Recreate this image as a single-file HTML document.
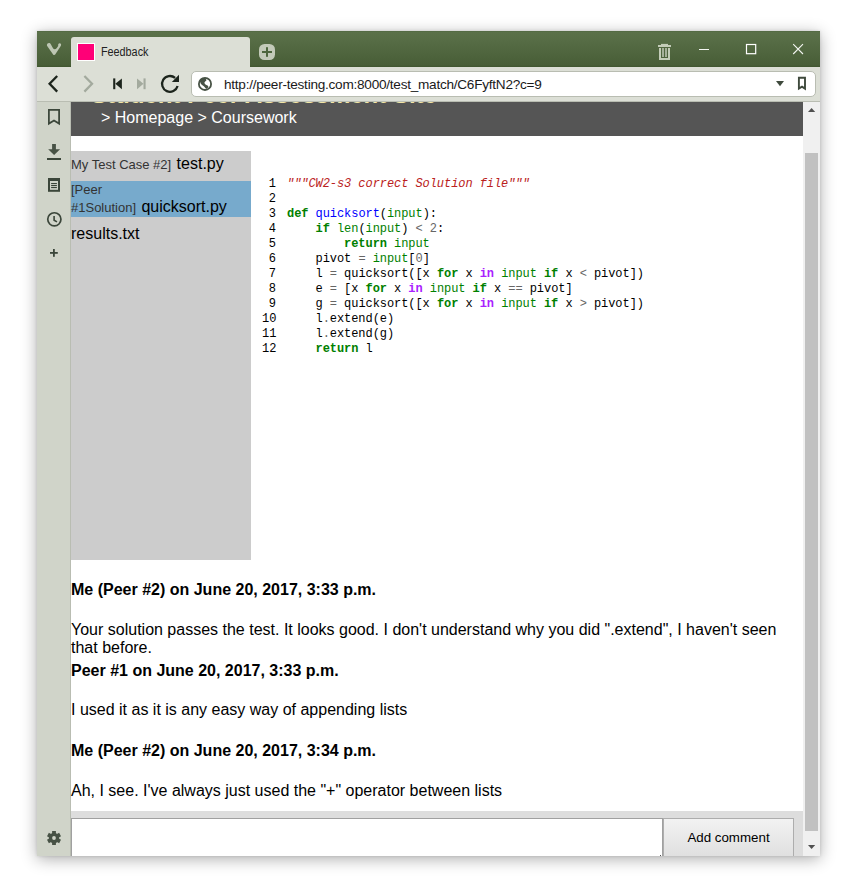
<!DOCTYPE html>
<html><head><meta charset="utf-8">
<style>
html,body{margin:0;padding:0;width:853px;height:892px;overflow:hidden;background:#fff;font-family:"Liberation Sans",sans-serif;}
.a{position:absolute;}
#win{left:37px;top:31px;width:783px;height:825px;box-shadow:0 3px 15px rgba(0,0,0,0.32),0 0 3px rgba(0,0,0,0.12);background:#d0d4c9;overflow:hidden;}
#title{left:37px;top:31px;width:783px;height:36px;background:linear-gradient(#4e653f 0px,#5b714a 1px,#5a7049 3px,#485e37 34px,#3f552f 36px);}
#tab{left:71px;top:37px;width:179px;height:30px;background:#dcdfd6;border-radius:3px 3px 0 0;}
#toolbar{left:37px;top:67px;width:783px;height:35px;background:#dcdfd6;}
#addr{left:191px;top:71px;width:623px;height:24px;background:#fff;border:1px solid #b9bdb2;border-radius:5px;}
#panel{left:37px;top:102px;width:33px;height:754px;background:#d0d4c9;border-right:1px solid #b9bdb2;}
#content{left:71px;top:102px;width:732px;height:754px;background:#fff;overflow:hidden;}
#hdr{left:71px;top:102px;width:732px;height:34px;background:#555555;overflow:hidden;}
#sb{left:803px;top:102px;width:17px;height:754px;background:#f0f0f0;}
#thumb{left:805px;top:153px;width:13px;height:678px;background:#c1c1c1;}
#files{left:71px;top:151px;width:180px;height:409px;background:#cccccc;}
.code{font-family:"Liberation Mono",monospace;font-size:12px;line-height:15px;white-space:pre;letter-spacing:-0.065px;}
.k{color:#008000;font-weight:bold}
.nb{color:#008000}
.nf{color:#0000ff}
.ow{color:#aa22ff;font-weight:bold}
.o{color:#666666}
.mi{color:#666666}
.sd{color:#ba2121;font-style:italic}
.cm{font-size:16px;line-height:18px;color:#000;white-space:nowrap;}
</style></head>
<body>
<div id="win" class="a"></div>
<div id="title" class="a"></div>
<div id="tab" class="a"></div>
<div id="toolbar" class="a"></div>
<div id="addr" class="a"></div>
<div id="panel" class="a"></div>
<div class="a" style="left:37px;top:101px;width:783px;height:1px;background:#b9bdb2;"></div>
<div id="content" class="a"></div>
<div id="hdr" class="a"><div class="a" style="left:20px;top:-19px;font-size:24px;line-height:24px;font-weight:bold;color:#f2e6a6;white-space:nowrap;">Student Peer Assessment Site</div></div>
<div id="sb" class="a"></div>
<div id="thumb" class="a"></div>
<div id="files" class="a"></div>

<!-- tab contents -->
<div class="a" style="left:77px;top:43px;width:16px;height:16px;background:#ff0077;border:1px solid #fff;"></div>
<div class="a" style="left:101px;top:45px;font-size:12px;color:#222;transform:scaleX(0.9);transform-origin:0 0;">Feedback</div>

<!-- url -->
<div class="a" style="left:224px;top:77px;font-size:13.6px;letter-spacing:-0.25px;color:#1a1a1a;">http://peer-testing.com:8000/test_match/C6FyftN2?c=9</div>

<!-- breadcrumb -->
<div class="a" style="left:101px;top:109px;font-size:16px;color:#fff;">&gt; Homepage &gt; Coursework</div>

<!-- files -->
<div class="a" style="left:71px;top:155px;font-size:13px;color:#333;white-space:nowrap;">My Test Case #2] <span style="font-size:16px;color:#000;margin-left:1.8px">test.py</span></div>
<div class="a" style="left:71px;top:181px;width:180px;height:36px;background:#77aacc;"></div>
<div class="a" style="left:71px;top:182px;font-size:13px;color:#333;line-height:15px;white-space:nowrap;">[Peer</div>
<div class="a" style="left:71px;top:198px;font-size:13px;color:#333;white-space:nowrap;">#1Solution] <span style="font-size:16px;color:#000;margin-left:1.8px">quicksort.py</span></div>
<div class="a" style="left:71px;top:225px;font-size:16px;color:#000;">results.txt</div>

<!-- code -->
<div class="a code" style="left:262px;top:177px;text-align:right;width:14px;">1
2
3
4
5
6
7
8
9
10
11
12</div>
<div class="a code" style="left:287px;top:177px;"><span class="sd">"""CW2-s3 correct Solution file"""</span>

<span class="k">def</span> <span class="nf">quicksort</span>(<span class="nb">input</span>):
    <span class="k">if</span> <span class="nb">len</span>(<span class="nb">input</span>) <span class="o">&lt;</span> <span class="mi">2</span>:
        <span class="k">return</span> <span class="nb">input</span>
    pivot <span class="o">=</span> <span class="nb">input</span>[<span class="mi">0</span>]
    l <span class="o">=</span> quicksort([x <span class="k">for</span> x <span class="ow">in</span> <span class="nb">input</span> <span class="k">if</span> x <span class="o">&lt;</span> pivot])
    e <span class="o">=</span> [x <span class="k">for</span> x <span class="ow">in</span> <span class="nb">input</span> <span class="k">if</span> x <span class="o">==</span> pivot]
    g <span class="o">=</span> quicksort([x <span class="k">for</span> x <span class="ow">in</span> <span class="nb">input</span> <span class="k">if</span> x <span class="o">&gt;</span> pivot])
    l<span class="o">.</span>extend(e)
    l<span class="o">.</span>extend(g)
    <span class="k">return</span> l</div>

<!-- comments -->
<div class="a cm" style="left:71px;top:581px;font-weight:bold;">Me (Peer #2) on June 20, 2017, 3:33 p.m.</div>
<div class="a cm" style="left:71px;top:621px;">Your solution passes the test. It looks good. I don't understand why you did ".extend", I haven't seen<br>that before.</div>
<div class="a cm" style="left:71px;top:662px;font-weight:bold;">Peer #1 on June 20, 2017, 3:33 p.m.</div>
<div class="a cm" style="left:71px;top:701px;">I used it as it is any easy way of appending lists</div>
<div class="a cm" style="left:71px;top:742px;font-weight:bold;">Me (Peer #2) on June 20, 2017, 3:34 p.m.</div>
<div class="a cm" style="left:71px;top:782px;">Ah, I see. I've always just used the "+" operator between lists</div>

<!-- comment bar -->
<div class="a" style="left:71px;top:811px;width:732px;height:45px;background:#dddddd;"></div>
<div class="a" style="left:71px;top:818px;width:590px;height:37px;background:#fff;border-top:1px solid #a0a0a0;border-left:1px solid #a0a0a0;border-right:1px solid #a0a0a0;"></div>
<div class="a" style="left:663px;top:818px;width:129px;height:37px;background:linear-gradient(#f2f2f2,#e0e0e0);border:1px solid #adadad;border-bottom:none;font-size:13.333px;color:#000;text-align:center;line-height:38px;">Add comment</div>


<svg class="a" style="left:0;top:0;" width="853" height="892" viewBox="0 0 853 892">
 <!-- vivaldi logo -->
 <path d="M47,45.8 C46.6,44.4 47.6,43 49,43 C49.8,43 50.4,43.5 50.8,44.2 L53,48.2 C53.8,49.5 55.6,49.5 56.6,48.2 L58.2,45.9 C57.9,44.5 58.6,43.3 59.7,43.3 C60.9,43.3 61.5,44.5 60.9,45.8 L55.2,54.6 C54.8,55.2 53.6,55.2 53.1,54.5 Z" fill="#bdc6b3"/>
 <!-- new tab -->
 <rect x="259" y="44" width="16" height="16" rx="5.5" fill="#c3cab9"/>
 <rect x="262" y="51" width="10" height="2" fill="#4d663d"/>
 <rect x="266" y="47.2" width="2" height="9.6" fill="#4d663d"/>
 <!-- trash -->
 <g fill="#c3ccb8">
  <rect x="661" y="43.9" width="7" height="1.2"/>
  <rect x="658" y="45" width="13" height="2"/>
  <rect x="659" y="48" width="2" height="12"/>
  <rect x="668" y="48" width="2" height="12"/>
  <rect x="659" y="58" width="11" height="2"/>
 </g>
 <g fill="#a5b09a">
  <rect x="662" y="48" width="2" height="9"/>
  <rect x="665" y="48" width="2" height="9"/>
 </g>
 <!-- window controls -->
 <rect x="699" y="49" width="10" height="1" fill="#f4f6f2"/>
 <rect x="746.5" y="44.5" width="9.2" height="9.2" fill="none" stroke="#fff" stroke-width="1.2"/>
 <path d="M793.2,44.2 L803,54 M803,44.2 L793.2,54" stroke="#f4f6f2" stroke-width="1.1"/>
 <!-- back / forward -->
 <path d="M57.2,76 L49.6,83.8 L57.2,91.6" fill="none" stroke="#1c241c" stroke-width="2.3"/>
 <path d="M84.4,76 L92,83.8 L84.4,91.6" fill="none" stroke="#a3aa9e" stroke-width="2.3"/>
 <!-- rewind / ff -->
 <rect x="113.2" y="78.4" width="2.1" height="10.8" fill="#1c241c"/>
 <path d="M115.3,83.8 L121.9,78.4 L121.9,89.2 Z" fill="#1c241c"/>
 <rect x="143.5" y="78.4" width="2.1" height="10.8" fill="#a3aa9e"/>
 <path d="M143.5,83.8 L137,78.4 L137,89.2 Z" fill="#a3aa9e"/>
 <!-- reload -->
 <path d="M177.6,86 A7.9,7.9 0 1 1 175.1,77.9" fill="none" stroke="#1c241c" stroke-width="2.3"/>
 <path d="M171.8,82 L179,82 L179,74.8 Z" fill="#1c241c"/>
 <!-- globe -->
 <circle cx="205" cy="83.9" r="6.1" fill="none" stroke="#475245" stroke-width="1.8"/>
 <path d="M199.8,80 C201,78.3 203.6,77.5 205.9,78.6 L206.4,80.5 C205.7,81.3 204.5,81.8 204.4,82.8 C204.7,84.1 206,85 207.5,85.5 C208.6,86 208.6,87.4 207.6,88.1 L206.3,89 C205.3,88 204.7,86.8 203.5,86 C202,85.2 200.8,84.3 200.3,82.6 C200,81.8 199.8,80.9 199.8,80 Z" fill="#475245"/>
 <!-- address dropdown + bookmark -->
 <path d="M776,81 L784,81 L780,86.3 Z" fill="#3f4a3d"/>
 <path d="M798.9,77.8 L805,77.8 L805,88.6 L802,86.6 L798.9,88.6 Z" fill="none" stroke="#3f4a3d" stroke-width="1.9" stroke-linejoin="miter"/>
 <!-- panel icons -->
 <path d="M48.9,109.9 L59.1,109.9 L59.1,123.6 L54,120.6 L48.9,123.6 Z" fill="none" stroke="#3b463a" stroke-width="1.75"/>
 <rect x="52.1" y="144" width="3.8" height="6" fill="#475245"/>
 <path d="M48.2,149.3 L60.1,149.3 L54.1,155 Z" fill="#475245"/>
 <rect x="47" y="158" width="14" height="2" fill="#3b463a"/>
 <rect x="49" y="179.4" width="10" height="11.4" fill="none" stroke="#3b463a" stroke-width="2"/>
 <rect x="48" y="178" width="12" height="3" fill="#3b463a"/>
 <rect x="51.1" y="183" width="5.8" height="1.1" fill="#3b463a"/>
 <rect x="51.1" y="185" width="5.8" height="1.1" fill="#3b463a"/>
 <rect x="51.1" y="187" width="5.8" height="1.1" fill="#3b463a"/>
 <circle cx="54.35" cy="219.35" r="6.6" fill="none" stroke="#3b463a" stroke-width="1.7"/>
 <path d="M54.1,216 L54.1,220.2 L57,221.9" fill="none" stroke="#3b463a" stroke-width="1.6"/>
 <rect x="50" y="252" width="7.8" height="1.8" fill="#3b463a"/>
 <rect x="53" y="249" width="1.8" height="7.8" fill="#3b463a"/>
 <!-- gear -->
 <g transform="translate(54,838)" fill="#475245">
  <circle r="5.2"/>
  <rect x="-1.9" y="-7" width="3.8" height="14"/>
  <rect x="-1.9" y="-7" width="3.8" height="14" transform="rotate(60)"/>
  <rect x="-1.9" y="-7" width="3.8" height="14" transform="rotate(120)"/>
  <circle r="1.9" fill="#d0d4c9"/>
 </g>
 <rect x="660" y="855" width="1" height="1" fill="#555"/>
 <!-- scrollbar arrows -->
 <path d="M808,112 L815.2,112 L811.6,108 Z" fill="#505050"/>
 <path d="M808,845 L815.2,845 L811.6,849 Z" fill="#505050"/>
</svg>

</body></html>
